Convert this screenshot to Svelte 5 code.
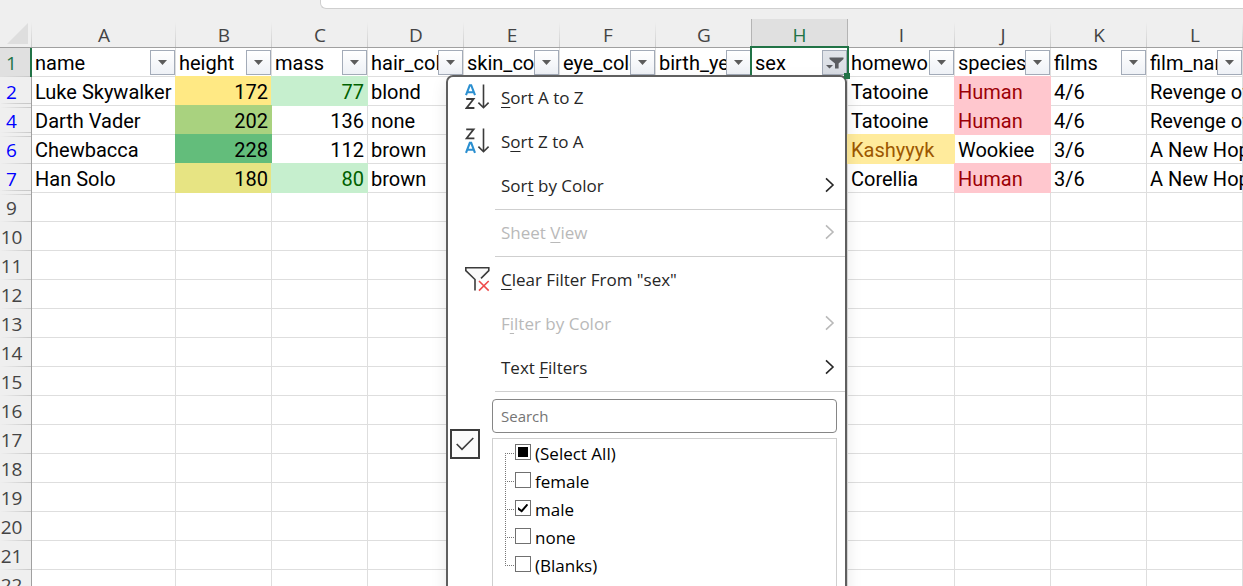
<script>
  const columns = [
    { letter: 'A', name: 'name', width: 144 },
    { letter: 'B', name: 'height', width: 96 },
    { letter: 'C', name: 'mass', width: 96 },
    { letter: 'D', name: 'hair_color', width: 96 },
    { letter: 'E', name: 'skin_color', width: 96 },
    { letter: 'F', name: 'eye_color', width: 96 },
    { letter: 'G', name: 'birth_year', width: 96 },
    { letter: 'H', name: 'sex', width: 96, active: true },
    { letter: 'I', name: 'homeworld', width: 107 },
    { letter: 'J', name: 'species', width: 96 },
    { letter: 'K', name: 'films', width: 96 },
    { letter: 'L', name: 'film_names', width: 96 }
  ];

  const rows = [
    {
      n: 2, gapBefore: false, gapAfter: true,
      cells: {
        A: ['Luke Skywalker'], B: [172, 'num scale-mid'], C: [77, 'num good'], D: ['blond'],
        I: ['Tatooine'], J: ['Human', 'bad'], K: ['4/6'], L: ['Revenge of the Sith']
      }
    },
    {
      n: 4, gapBefore: true, gapAfter: true,
      cells: {
        A: ['Darth Vader'], B: [202, 'num scale-high'], C: [136, 'num'], D: ['none'],
        I: ['Tatooine'], J: ['Human', 'bad'], K: ['4/6'], L: ['Revenge of the Sith']
      }
    },
    {
      n: 6, gapBefore: true, gapAfter: false,
      cells: {
        A: ['Chewbacca'], B: [228, 'num scale-top'], C: [112, 'num'], D: ['brown'],
        I: ['Kashyyyk', 'neutral'], J: ['Wookiee'], K: ['3/6'], L: ['A New Hope']
      }
    },
    {
      n: 7, gapBefore: false, gapAfter: true,
      cells: {
        A: ['Han Solo'], B: [180, 'num scale-low'], C: [80, 'num good'], D: ['brown'],
        I: ['Corellia'], J: ['Human', 'bad'], K: ['3/6'], L: ['A New Hope']
      }
    }
  ];

  const blankRows = Array.from({ length: 14 }, (_, i) => i + 9);

  let query = $state('');
  let manual = $state(true);
  let options = $state([
    { label: 'female', checked: false },
    { label: 'male', checked: true },
    { label: 'none', checked: false },
    { label: '(Blanks)', checked: false }
  ]);

  const all = $derived(options.every((o) => o.checked));
  const some = $derived(!all && options.some((o) => o.checked));

  function toggleAll(event) {
    const value = event.currentTarget.checked;
    options.forEach((o) => (o.checked = value));
  }
</script>

{#snippet item(before, key, after, { icon = null, sub = false, disabled = false } = {})}
  <button class="item" role="menuitem" type="button" {disabled} aria-haspopup={sub ? 'menu' : undefined}>
    <span class="icon">{#if icon}{@render icon()}{/if}</span>
    <span class="text">{before}<u>{key}</u>{after}</span>
    {#if sub}
      <svg class="chevron" width="10" height="16" viewBox="0 0 10 16" aria-hidden="true">
        <path d="M1 1.3 L8 8 L1 14.7" fill="none" stroke="currentColor" stroke-width="1.6" />
      </svg>
    {/if}
  </button>
{/snippet}

{#snippet letterA(y)}
  <path d="M1 {y + 10} L4.8 {y} H6.2 L10 {y + 10} M2.4 {y + 7} H8.6" fill="none" stroke="#2b8fd0" stroke-width="2.1" />
{/snippet}

{#snippet letterZ(y)}
  <path d="M1.2 {y} H8.6 L1.6 {y + 9} H9.4" fill="none" stroke="#3b3b3b" stroke-width="1.8" />
{/snippet}

{#snippet downArrow()}
  <path d="M18.5 0.5 V23.5 M13.4 18.6 L18.5 23.7 L23.6 18.6" fill="none" stroke="#3b3b3b" stroke-width="1.6" />
{/snippet}

{#snippet sortAsc()}
  <svg width="25" height="26" viewBox="0 0 25 26" aria-hidden="true">
    {@render letterA(1.2)}{@render letterZ(15)}{@render downArrow()}
  </svg>
{/snippet}

{#snippet sortDesc()}
  <svg width="25" height="26" viewBox="0 0 25 26" aria-hidden="true">
    {@render letterZ(1.3)}{@render letterA(14.8)}{@render downArrow()}
  </svg>
{/snippet}

{#snippet clearFilter()}
  <svg width="25" height="26" viewBox="0 0 25 26" aria-hidden="true">
    <path d="M10 24.5 V13.5 L0.8 4.6 V1.8 H23.8 V4.6 L16 12.4" fill="#fafafa" stroke="#3b3b3b" stroke-width="1.6" />
    <path d="M14 15 L23.7 24.6 M23.7 15 L14 24.6" fill="none" stroke="#ee4b4b" stroke-width="1.6" />
  </svg>
{/snippet}

<div class="app">
  <div class="formula-strip"><div class="formula-bar"></div></div>

  <div class="sheet">
    <table>
      <colgroup>
        <col class="row-col" />
        {#each columns as c}<col style="width: {c.width}px" />{/each}
        <col />
      </colgroup>
      <thead>
        <tr>
          <td class="corner">
            <svg width="21" height="21" viewBox="0 0 21 21" aria-hidden="true"><path d="M21 0 V21 H0 Z" fill="#dedede" /></svg>
          </td>
          {#each columns as c}
            <th scope="col" class="letter" class:current={c.active}>{c.letter}</th>
          {/each}
          <td class="letter"></td>
        </tr>
      </thead>
      <tbody>
        <tr>
          <th scope="row" class="number current">1</th>
          {#each columns as c}
            <td class="field">
              <div class="field-box">
                <span class="field-name">{c.name}</span>
                <button class="filter" class:on={c.active} type="button" aria-label="Filter {c.name}">
                  {#if c.active}
                    <svg width="18" height="14" viewBox="0 0 18 14" aria-hidden="true">
                      <path d="M3.5 1.5 H17.5 V3 L12.6 7.5 V12.5 H9 V7.5 L3.5 3 Z M0 9 H7 L3.5 12.6 Z" fill="#5b5d61" />
                    </svg>
                  {:else}
                    <svg width="9" height="5" viewBox="0 0 9 5" aria-hidden="true"><path d="M0 0 H9 L4.5 5 Z" fill="#5c5c5c" /></svg>
                  {/if}
                </button>

                {#if c.active}
                  <div class="selection"></div>
                  <div class="menu" role="menu" aria-label="Filter by sex">
                    {@render item('', 'S', 'ort A to Z', { icon: sortAsc })}
                    {@render item('S', 'o', 'rt Z to A', { icon: sortDesc })}
                    {@render item('Sor', 't', ' by Color', { sub: true })}
                    <hr />
                    {@render item('Sheet ', 'V', 'iew', { sub: true, disabled: true })}
                    <hr />
                    {@render item('', 'C', 'lear Filter From "sex"', { icon: clearFilter })}
                    {@render item('F', 'i', 'lter by Color', { sub: true, disabled: true })}
                    {@render item('Text ', 'F', 'ilters', { sub: true })}
                    <hr />
                    <div class="values">
                      <button class="manual" type="button" aria-label="Filter by value" aria-pressed={manual} onclick={() => (manual = !manual)}>
                        {#if manual}
                          <svg width="18" height="14" viewBox="0 0 18 14" aria-hidden="true">
                            <path d="M0.7 7 L6 12.4 L17.3 1" fill="none" stroke="#3b3b3b" stroke-width="1.6" />
                          </svg>
                        {/if}
                      </button>
                      <div class="values-main">
                        <input class="search" type="text" placeholder="Search" aria-label="Search" bind:value={query} />
                        <div class="tree">
                          <label class="node">
                            <input type="checkbox" checked={all} indeterminate={some} onchange={toggleAll} />
                            <span>(Select All)</span>
                          </label>
                          {#each options as o}
                            <label class="node">
                              <input type="checkbox" bind:checked={o.checked} />
                              <span>{o.label}</span>
                            </label>
                          {/each}
                        </div>
                      </div>
                    </div>
                  </div>
                  <div class="handle"></div>
                {/if}
              </div>
            </td>
          {/each}
          <td></td>
        </tr>
        {#each rows as r}
          <tr>
            <th scope="row" class="number filtered" class:gap-before={r.gapBefore} class:gap-after={r.gapAfter}>{r.n}</th>
            {#each columns as c}
              <td class={r.cells[c.letter]?.[1] ?? ''}>{r.cells[c.letter]?.[0] ?? ''}</td>
            {/each}
            <td></td>
          </tr>
        {/each}
        {#each blankRows as n}
          <tr>
            <th scope="row" class="number" class:gap-before={n === 9}>{n}</th>
            {#each columns as c}<td></td>{/each}
            <td></td>
          </tr>
        {/each}
      </tbody>
    </table>
  </div>
</div>

<style>
  :global(body) {
    margin: 0;
    background: #fff;
  }

  .app {
    --ui: 'Open Sans', 'Noto Sans', sans-serif;
    --grid: #dedede;
    --chrome: #efefef;
    --green: #217346;
    display: flex;
    flex-direction: column;
    height: 100vh;
    overflow: hidden;
    color: #000;
    font: 20px/28px Roboto, 'Liberation Sans', sans-serif;
  }

  .formula-strip {
    flex: none;
    height: 19px;
    padding-left: 320px;
    background: var(--chrome);
  }

  .formula-bar {
    height: 8px;
    border: solid #cfcfcf;
    border-width: 0 0 1px 1px;
    border-bottom-left-radius: 6px;
    background: #fff;
  }

  .sheet {
    flex: 1;
    min-height: 0;
    overflow: hidden;
  }

  table {
    width: 100%;
    table-layout: fixed;
    border-collapse: separate;
    border-spacing: 0;
  }

  .row-col {
    width: 32px;
  }

  td,
  th {
    box-sizing: border-box;
    height: 29px;
    padding: 2px 3px 0;
    border: solid var(--grid);
    border-width: 0 1px 1px 0;
    font-weight: 400;
    line-height: 26px;
    text-align: left;
    white-space: nowrap;
  }

  .corner,
  .letter {
    padding: 4px 0 0;
    border-bottom-color: #a0a0a0;
    border-right: 0;
    background: linear-gradient(to bottom, transparent 10%, #cdcdcd) right / 1px 100% no-repeat var(--chrome);
    color: #444;
    font-family: var(--ui);
    font-size: 19px;
    line-height: 24px;
    text-align: center;
  }

  .corner {
    padding: 1px 4px 0 0;
    line-height: 0;
    text-align: right;
  }

  .letter.current {
    border-right: 1px solid #b4b4b4;
    background: #e0e0e0;
    box-shadow: -1px 0 #b4b4b4;
    color: var(--green);
  }

  .number {
    padding: 2px 8px 0 0;
    border-right-color: #a0a0a0;
    border-bottom: 0;
    background: linear-gradient(to right, transparent, #c8c8c8) bottom / 100% 1px no-repeat var(--chrome);
    color: #444;
    font-family: var(--ui);
    font-size: 19px;
    line-height: 27px;
    text-align: center;
  }

  .number.current {
    padding-right: 7px;
    border-right: 2px solid var(--green);
    background-color: #e0e0e0;
    color: var(--green);
  }

  .number.filtered {
    color: #0000ff;
  }

  .number.gap-after {
    background-image: linear-gradient(to right, transparent, #c8c8c8), linear-gradient(to right, transparent, #c8c8c8);
    background-position: 0 26px, 0 26px;
  }

  .number.gap-before {
    background-image: linear-gradient(to right, transparent, #c8c8c8), linear-gradient(to right, transparent, #c8c8c8);
    background-position: 0 1px, 0 28px;
  }

  .number.gap-before.gap-after {
    background-position: 0 1px, 0 26px;
  }

  .num {
    text-align: right;
  }

  .scale-mid { --fill: #ffe984; }
  .scale-high { --fill: #a9d27f; }
  .scale-top { --fill: #63bd7b; }
  .scale-low { --fill: #e7e483; }
  .good { --fill: #c6efce; color: #006100; }
  .bad { --fill: #ffc7ce; color: #9c0006; }
  .neutral { --fill: #ffeb9c; color: #9c5700; }

  .scale-mid,
  .scale-high,
  .scale-top,
  .scale-low,
  .good,
  .bad,
  .neutral {
    border-color: var(--fill);
    background: var(--fill);
    box-shadow: -1px 0 var(--fill), 0 -1px var(--fill), -1px -1px var(--fill);
  }

  .field {
    padding: 0;
  }

  .field-box {
    position: relative;
    display: flex;
    height: 28px;
    padding-left: 3px;
    box-sizing: border-box;
  }

  .field-name {
    flex: 1;
    min-width: 0;
    overflow: hidden;
    line-height: 30px;
  }

  .filter {
    display: flex;
    flex: none;
    align-items: center;
    justify-content: center;
    box-sizing: border-box;
    width: 25px;
    height: 25px;
    margin-top: 2px;
    padding: 0;
    border: 1px solid #a3abb8;
    background: linear-gradient(#fff, #eef1f6);
  }

  .filter.on {
    background: linear-gradient(#e2e5ea, #d8dce3);
  }

  .selection {
    position: absolute;
    z-index: 1;
    inset: -2px;
    border: 2px solid var(--green);
    pointer-events: none;
  }

  .handle {
    position: absolute;
    z-index: 3;
    right: -3px;
    bottom: -3px;
    width: 6px;
    height: 6px;
    background: var(--green);
  }

  .menu {
    position: absolute;
    z-index: 2;
    top: 27px;
    right: 0;
    box-sizing: border-box;
    width: 401px;
    border: 2px solid #5f5f5f;
    border-radius: 7px;
    background: #fff;
    box-shadow: 0 6px 16px rgba(0, 0, 0, 0.1);
    color: #262626;
    font-family: var(--ui);
    font-size: 17px;
  }

  .item {
    display: flex;
    align-items: center;
    box-sizing: border-box;
    width: 100%;
    height: 44px;
    padding: 0 10px 4px 17px;
    border: 0;
    background: none;
    color: inherit;
    font: inherit;
    text-align: left;
  }

  .item:disabled {
    color: #b9b9b9;
  }

  .item u {
    text-decoration-thickness: 1px;
    text-underline-offset: 3px;
    text-decoration-skip-ink: none;
  }

  .icon {
    display: flex;
    flex: none;
    width: 36px;
  }

  .text {
    flex: 1;
    padding-top: 2px;
  }

  hr {
    height: 1px;
    margin: 0 0 2px 47px;
    border: 0;
    background: #cfcfcf;
  }

  .values {
    display: flex;
    align-items: flex-start;
    padding: 5px 8px 0 2px;
  }

  .manual {
    display: flex;
    flex: none;
    align-items: center;
    justify-content: center;
    box-sizing: border-box;
    width: 30px;
    height: 30px;
    margin: 30px 12px 0 0;
    padding: 0;
    border: 2px solid #3b3b3b;
    background: #fafafa;
  }

  .values-main {
    flex: 1;
  }

  .search {
    display: block;
    box-sizing: border-box;
    width: 100%;
    height: 34px;
    padding: 0 8px;
    border: 1px solid #868686;
    border-radius: 4px;
    background: #fff;
    font: 15px var(--ui);
  }

  .search::placeholder {
    color: #757575;
    opacity: 1;
  }

  .tree {
    margin-top: 5px;
    padding: 0 0 28px 12px;
    border: 1px solid #cfcfcf;
    color: #000;
  }

  .node {
    display: flex;
    align-items: center;
    height: 28px;
    padding-left: 10px;
    line-height: 24px;
    background:
      repeating-linear-gradient(to bottom, #777 0 1px, transparent 1px 2px) 0 0 / 1px 100% no-repeat,
      repeating-linear-gradient(to right, #777 0 1px, transparent 1px 2px) 0 14px / 9px 1px no-repeat;
  }

  .node span {
    padding-top: 2px;
  }

  .node:first-child {
    background-position: 0 14px, 0 14px;
  }

  .node:last-child {
    background-size: 1px 14px, 9px 1px;
  }

  .node input {
    display: grid;
    place-items: center;
    appearance: none;
    box-sizing: border-box;
    width: 16px;
    height: 16px;
    margin: 0 4px 2px 0;
    border: 1px solid #707070;
    background: #fff;
  }

  .node input:indeterminate::before {
    content: '';
    width: 10px;
    height: 10px;
    background: #000;
  }

  .node input:checked::before {
    content: '';
    width: 10px;
    height: 9px;
    background: #000;
    clip-path: polygon(0 40%, 35% 70%, 90% 0, 100% 20%, 38% 100%, 0 70%);
  }
</style>
